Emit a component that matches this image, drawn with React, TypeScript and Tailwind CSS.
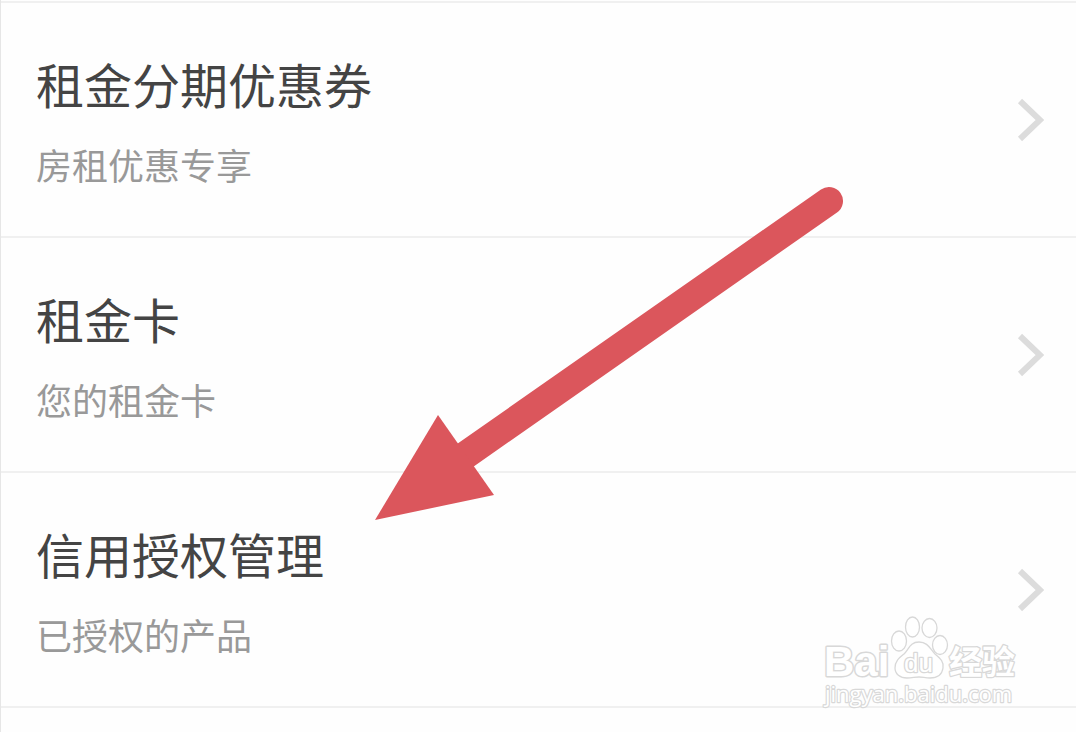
interface MenuItem {
  title: string;
  description: string;
}

const items: MenuItem[] = [
  { title: "租金分期优惠券", description: "房租优惠专享" },
  { title: "租金卡", description: "您的租金卡" },
  { title: "信用授权管理", description: "已授权的产品" },
];

function Chevron() {
  return (
    <svg
      className="h-11 w-7 shrink-0"
      viewBox="0 0 28 44"
      fill="none"
      stroke="#dcdcdc"
      strokeWidth="6"
      aria-hidden="true"
    >
      <path d="M4 3 L24 22 L4 41" />
    </svg>
  );
}

function MenuRow({ title, description }: MenuItem) {
  return (
    <li className="border-b-2 border-[#f0f0f0]">
      <a
        href="#"
        className="flex items-center justify-between py-12 pr-8 pl-[35px]"
      >
        <div className="flex flex-col gap-6">
          <span className="text-5xl leading-[65px] text-[#444444]">
            {title}
          </span>
          <span className="text-4xl leading-[48px] text-[#999999]">
            {description}
          </span>
        </div>
        <Chevron />
      </a>
    </li>
  );
}

// Red pointer drawn over the list
function Arrow() {
  return (
    <svg
      className="pointer-events-none absolute top-[180px] left-[369px]"
      width="480"
      height="350"
      viewBox="0 0 480 350"
      aria-hidden="true"
    >
      <path
        d="M459 21 L90 279"
        stroke="#db565c"
        strokeWidth="28"
        strokeLinecap="round"
      />
      <path d="M5 340 L68 235 L124 315 Z" fill="#db565c" />
    </svg>
  );
}

function Watermark() {
  return (
    <svg
      className="pointer-events-none absolute top-[612px] right-[52px]"
      width="204"
      height="104"
      viewBox="0 0 204 104"
      fill="#ffffff"
      stroke="#d8d8d8"
      strokeWidth="1.3"
      strokeLinejoin="round"
    >
      <text
        x="4"
        y="64"
        strokeWidth="3"
        className="font-['Liberation_Sans',sans-serif] text-[42px] font-bold [paint-order:stroke]"
      >
        Bai
      </text>
      <ellipse cx="79" cy="29" rx="7.5" ry="10" />
      <ellipse cx="92.5" cy="15" rx="7" ry="10" />
      <ellipse cx="109.5" cy="16" rx="7.5" ry="9.5" />
      <ellipse cx="120" cy="33" rx="7.5" ry="9.5" />
      <path d="M99 30 C108 30 110 37 115 42 C121 47 124 50 123 56 C122 63 117 66 110 66 C105 66 103 65 99 65 C95 65 92 66 87 66 C80 66 75 62 75 56 C75 49 79 46 84 42 C89 37 90 30 99 30 Z" />
      <text
        x="84"
        y="60"
        strokeWidth="2.6"
        className="font-['Liberation_Sans',sans-serif] text-[26px] [paint-order:stroke]"
      >
        du
      </text>
      <text
        x="129"
        y="62"
        strokeWidth="2.6"
        className="font-['Noto_Sans_CJK_SC',sans-serif] text-[33px] font-bold [paint-order:stroke]"
      >
        经验
      </text>
      <text
        x="5"
        y="90"
        strokeWidth="2.4"
        className="font-['Open_Sans',sans-serif] text-[22px] font-medium [paint-order:stroke]"
      >
        jingyan.baidu.com
      </text>
    </svg>
  );
}

export default function App() {
  return (
    <main className="relative min-h-screen overflow-hidden border-l border-[#e6e6e6] bg-[#fefefe] pt-px font-['Noto_Sans_CJK_SC',sans-serif]">
      <ul className="border-t-2 border-[#f0f0f0]">
        {items.map((item) => (
          <MenuRow key={item.title} {...item} />
        ))}
      </ul>
      <Arrow />
      <Watermark />
    </main>
  );
}
